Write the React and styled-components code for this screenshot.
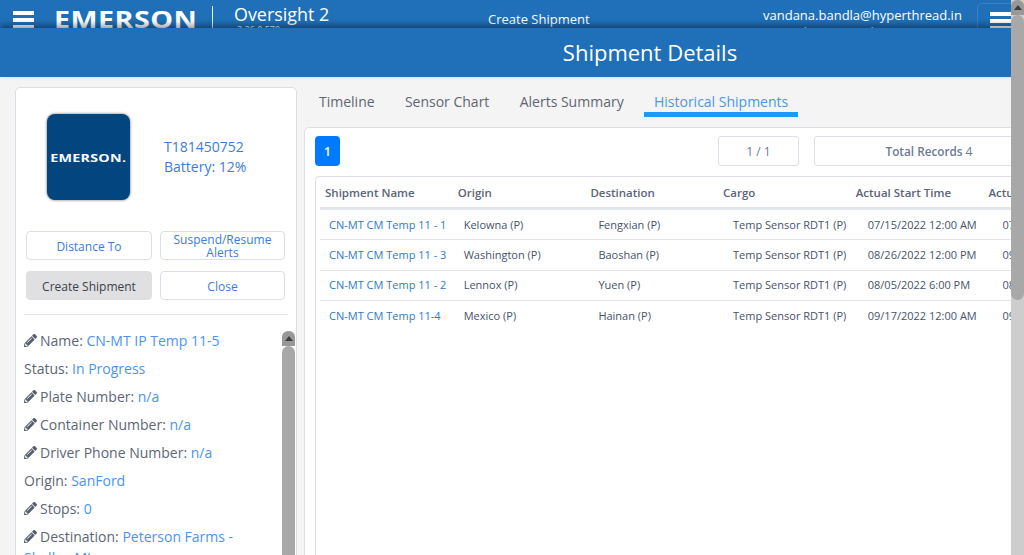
import styled, { createGlobalStyle } from 'styled-components'
import { FaPencilAlt } from 'react-icons/fa'

const GlobalStyle = createGlobalStyle`
html, body {
  margin: 0;
  padding: 0;
  height: 100%;
  overflow: hidden;
  background: #f4f4f4;
  font-family: "Open Sans", sans-serif;
}
* { box-sizing: border-box; }
`

const rows = [
  ['CN-MT CM Temp 11 - 1', 'Kelowna (P)', 'Fengxian (P)', 'Temp Sensor RDT1 (P)', '07/15/2022 12:00 AM', '07/16/2022 12:00 AM'],
  ['CN-MT CM Temp 11 - 3', 'Washington (P)', 'Baoshan (P)', 'Temp Sensor RDT1 (P)', '08/26/2022 12:00 PM', '09/01/2022 12:00 PM'],
  ['CN-MT CM Temp 11 - 2', 'Lennox (P)', 'Yuen (P)', 'Temp Sensor RDT1 (P)', '08/05/2022 6:00 PM', '08/09/2022 6:00 PM'],
  ['CN-MT CM Temp 11-4', 'Mexico (P)', 'Hainan (P)', 'Temp Sensor RDT1 (P)', '09/17/2022 12:00 AM', '09/20/2022 12:00 AM'],
]

const headers = ['Shipment Name', 'Origin', 'Destination', 'Cargo', 'Actual Start Time', 'Actual End Time']

const details = [
  { label: 'Name:', value: 'CN-MT IP Temp 11-5', edit: true },
  { label: 'Status:', value: 'In Progress' },
  { label: 'Plate Number:', value: 'n/a', edit: true },
  { label: 'Container Number:', value: 'n/a', edit: true },
  { label: 'Driver Phone Number:', value: 'n/a', edit: true },
  { label: 'Origin:', value: 'SanFord' },
  { label: 'Stops:', value: '0', edit: true },
  { label: 'Destination:', value: 'Peterson Farms - Shelby, MI', edit: true },
]

const Page = styled.div`
  position: relative;
  width: 1024px;
  height: 555px;
  overflow: hidden;
  display: flex;
  flex-direction: column;
`

const TopBar = styled.header`
  height: 28px;
  flex: none;
  overflow: hidden;
  background: #1f70b8;
  color: #fff;
  display: flex;
  align-items: flex-start;
`

const Burger = styled.div`
  width: 21px;
  flex: none;
  margin: 11px 0 0 13px;
  display: flex;
  flex-direction: column;
  gap: 3px;
  span {
    display: block;
    height: 4px;
    background: #fff;
  }
`

const Logo = styled.div`
  margin: 4px 0 0 20px;
  width: 158px;
  flex: none;
  display: flex;
  align-items: flex-end;
  font-size: 23.5px;
  line-height: 30px;
  font-weight: 700;
`

// the wordmark is much wider than Open Sans bold, so it gets stretched
const WordMark = styled.span`
  display: inline-block;
  letter-spacing: ${p => (p.$small ? '0.2px' : '0.4px')};
  transform: scaleX(${p => (p.$small ? 1.3 : 1.22)});
  transform-origin: ${p => (p.$small ? 'center' : 'left')};
`

const Divider = styled.div`
  width: 1px;
  height: 22px;
  margin-top: 6px;
  flex: none;
  background: #e6eef6;
`

const Product = styled.div`
  margin-left: 21px;
  width: 254px;
  flex: none;
  padding-top: 3px;
  font-size: 17.9px;
  line-height: 23px;
`

const Version = styled.div`
  font-size: 9px;
  line-height: 10px;
  margin-left: 3px;
  margin-top: -1px;
`

const PageName = styled.div`
  width: 275px;
  flex: none;
  padding-top: 10px;
  font-size: 13px;
  line-height: 18px;
`

const UserInfo = styled.div`
  width: 214px;
  flex: none;
  padding-top: 7px;
  font-size: 13px;
  line-height: 17px;
`

const MenuButton = styled.div`
  width: 60px;
  height: 40px;
  flex: none;
  margin-top: 3px;
  padding: 8px 0 0 12px;
  border: 1px solid #3a82c4;
  border-radius: 5px;
  ${Burger} {
    margin: 0;
  }
`

const Banner = styled.div`
  position: relative;
  height: 49px;
  flex: none;
  background: #1f70b8;
  box-shadow: 0 -3px 6px rgba(0, 0, 0, 0.4);
  color: #fff;
  font-size: 22px;
  line-height: 48px;
  text-align: center;
  padding-left: 276px;
`

const Body = styled.main`
  flex: 1;
  min-height: 0;
  display: flex;
  align-items: flex-start;
  gap: 7px;
  padding: 10px 0 0 15px;
`

const SideCard = styled.aside`
  width: 282px;
  height: 500px;
  flex: none;
  background: #fff;
  border: 1px solid #dcdfe9;
  border-radius: 5px;
  padding: 0 8px;
`

const DeviceRow = styled.div`
  display: flex;
  align-items: center;
  gap: 34px;
  padding: 26px 0 0 23px;
`

const LogoTile = styled.div`
  width: 83px;
  height: 86px;
  flex: none;
  background: #03467f;
  border-radius: 8px;
  box-shadow: 0 0 3px rgba(0, 0, 0, 0.6);
  color: #fff;
  font-size: 11px;
  font-weight: 700;
  display: flex;
  align-items: center;
  justify-content: center;
`

const DeviceInfo = styled.div`
  color: #3b7dd8;
  font-size: 14px;
  line-height: 20px;
`

const ButtonGrid = styled.div`
  display: grid;
  grid-template-columns: 126px 125px;
  column-gap: 8px;
  row-gap: 11px;
  margin: 31px 0 0 2px;
`

const ActionButton = styled.button`
  height: 29px;
  padding: 1px 4px 0;
  font-family: inherit;
  font-size: 12px;
  line-height: 13px;
  border-radius: 4px;
  border: 1px solid ${p => (p.$active ? '#e0e0e3' : '#dcdfe9')};
  background: ${p => (p.$active ? '#e0e0e3' : '#fff')};
  color: ${p => (p.$active ? '#3a3f47' : '#3b7dd8')};
`

const Rule = styled.div`
  height: 1px;
  margin-top: 14px;
  background: #e3e5ec;
`

const DetailList = styled.div`
  padding-top: 15px;
  width: 248px;
`

const DetailRow = styled.div`
  font-size: 14px;
  line-height: 21px;
  margin-bottom: 7px;
  color: #5d6675;
  svg {
    width: 13px;
    height: 13px;
    margin-right: 3px;
    vertical-align: -1px;
    color: #555e6c;
  }
`

const DetailValue = styled.span`
  color: #4a94f5;
`

const Main = styled.section`
  flex: 1;
  min-width: 0;
`

const Tabs = styled.nav`
  display: flex;
  height: 30px;
  padding-left: 5px;
  margin-bottom: 10px;
`

const Tab = styled.div`
  padding: 0 10px;
  margin-right: 10.3px;
  font-size: 14px;
  line-height: 29px;
  height: 30px;
  color: ${p => (p.$active ? '#4a94f5' : '#5f6672')};
  border-bottom: 5px solid ${p => (p.$active ? '#1a9bfc' : 'transparent')};
`

const Panel = styled.div`
  width: 760px;
  height: 440px;
  background: #fff;
  border: 1px solid #dcdfe9;
  border-radius: 5px 0 0 0;
  padding: 8px 0 0 10px;
`

const PagerRow = styled.div`
  display: flex;
  align-items: stretch;
  height: 30px;
`

const PageChip = styled.div`
  width: 25px;
  border-radius: 4px;
  background: #007bff;
  color: #fff;
  font-size: 12px;
  font-weight: 600;
  display: flex;
  align-items: center;
  justify-content: center;
`

const PagerBox = styled.div`
  width: ${p => p.$width}px;
  margin-left: ${p => p.$gap}px;
  border: 1px solid #dcdfe9;
  border-radius: 3px;
  color: #6c7a94;
  font-size: 12px;
  display: flex;
  align-items: center;
  justify-content: center;
  b {
    font-weight: 600;
    font-size: 11.75px;
    margin-right: 3px;
  }
`

const TableBox = styled.div`
  margin-top: 10px;
  height: 400px;
  border: 1px solid #dcdfe9;
  border-radius: 4px 0 0 0;
  padding-left: 4px;
`

const HeadRow = styled.div`
  display: flex;
  height: 33px;
  padding-left: 5px;
  border-bottom: 3px solid #e3e5ec;
  align-items: center;
`

const HeadCell = styled.div`
  width: 132.7px;
  flex: none;
  white-space: nowrap;
  color: #5b6478;
  font-size: 11.5px;
  font-weight: 600;
`

const DataRow = styled.div`
  display: flex;
  height: 30.33px;
  padding: 0 0 1px 9px;
  align-items: center;
  border-bottom: ${p => (p.$last ? 'none' : '1px solid #e3e5ec')};
`

const DataCell = styled.div`
  width: 134.7px;
  flex: none;
  white-space: nowrap;
  font-size: 11px;
  color: ${p => (p.$link ? '#2a7bc9' : '#46536a')};
`

const ScrollTrack = styled.div`
  position: absolute;
  top: ${p => p.$top}px;
  left: ${p => p.$left}px;
  bottom: 0;
  width: 13px;
  background: ${p => (p.$bare ? 'transparent' : '#cdcdcd')};
`

const ScrollArrow = styled.div`
  height: 15px;
  background: #989898;
  border-radius: 6px 6px 0 0;
  display: flex;
  align-items: center;
  justify-content: center;
  &::before {
    content: '';
    border-left: 4px solid transparent;
    border-right: 4px solid transparent;
    border-bottom: 5px solid #3c3c3c;
  }
`

const ScrollThumb = styled.div`
  height: ${p => p.$height}px;
  background: #a8a8a8;
  border-radius: 7px;
`

function App() {
  return (
    <Page>
      <GlobalStyle />
      <TopBar>
        <Burger><span /><span /><span /></Burger>
        <Logo><WordMark>EMERSON</WordMark></Logo>
        <Divider />
        <Product>
          Oversight 2
          <Version>2.26.0.570</Version>
        </Product>
        <PageName>Create Shipment</PageName>
        <UserInfo>
          vandana.bandla@hyperthread.in
          <div>Logged In: Control IT</div>
        </UserInfo>
        <MenuButton>
          <Burger><span /><span /><span /></Burger>
        </MenuButton>
      </TopBar>
      <Banner>Shipment Details</Banner>
      <Body>
        <SideCard>
          <DeviceRow>
            <LogoTile><WordMark $small>EMERSON.</WordMark></LogoTile>
            <DeviceInfo>
              <div>T181450752</div>
              <div>Battery: 12%</div>
            </DeviceInfo>
          </DeviceRow>
          <ButtonGrid>
            <ActionButton>Distance To</ActionButton>
            <ActionButton>Suspend/Resume Alerts</ActionButton>
            <ActionButton $active>Create Shipment</ActionButton>
            <ActionButton>Close</ActionButton>
          </ButtonGrid>
          <Rule />
          <DetailList>
            {details.map(d => (
              <DetailRow key={d.label}>
                {d.edit && <FaPencilAlt />}
                {d.label} <DetailValue>{d.value}</DetailValue>
              </DetailRow>
            ))}
          </DetailList>
        </SideCard>
        <Main>
          <Tabs>
            <Tab>Timeline</Tab>
            <Tab>Sensor Chart</Tab>
            <Tab>Alerts Summary</Tab>
            <Tab $active>Historical Shipments</Tab>
          </Tabs>
          <Panel>
            <PagerRow>
              <PageChip>1</PageChip>
              <PagerBox $width={81} $gap={378}>1 / 1</PagerBox>
              <PagerBox $width={230} $gap={15}><b>Total Records</b> 4</PagerBox>
            </PagerRow>
            <TableBox>
              <HeadRow>
                {headers.map(h => <HeadCell key={h}>{h}</HeadCell>)}
              </HeadRow>
              {rows.map((r, i) => (
                <DataRow key={r[0]} $last={i === rows.length - 1}>
                  {r.map((c, j) => <DataCell key={j} $link={j === 0}>{c}</DataCell>)}
                </DataRow>
              ))}
            </TableBox>
          </Panel>
        </Main>
      </Body>
      <ScrollTrack $bare $top={331} $left={282}>
        <ScrollArrow />
        <ScrollThumb $height={300} />
      </ScrollTrack>
      <ScrollTrack $top={0} $left={1011}>
        <ScrollArrow />
        <ScrollThumb $height={285} />
      </ScrollTrack>
    </Page>
  )
}

export default App
